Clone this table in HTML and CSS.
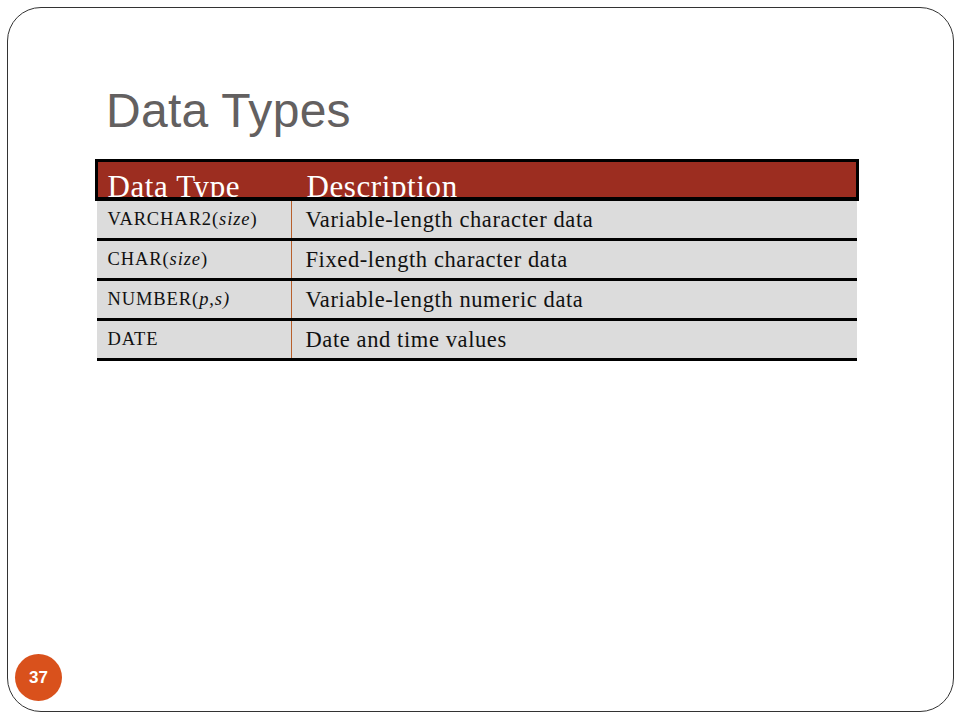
FILE: index.html
```html
<!DOCTYPE html>
<html lang="en">
<head>
<meta charset="utf-8">
<title>Data Types</title>
<link rel="stylesheet" href="styles.css">
</head>
<body>
<div class="slide">
  <h1 class="title">Data Types</h1>
  <div class="table">
    <div class="head">
      <div class="hcell c1">Data Type</div>
      <div class="hcell c2">Description</div>
    </div>
    <div class="rows">
      <div class="row">
        <div class="cell c1">VARCHAR2(<i>size</i>)</div>
        <div class="cell c2">Variable-length character data</div>
      </div>
      <div class="row">
        <div class="cell c1">CHAR(<i>size</i>)</div>
        <div class="cell c2">Fixed-length character data</div>
      </div>
      <div class="row">
        <div class="cell c1">NUMBER(<i>p</i>,<i>s)</i></div>
        <div class="cell c2">Variable-length numeric data</div>
      </div>
      <div class="row">
        <div class="cell c1">DATE</div>
        <div class="cell c2">Date and time values</div>
      </div>
    </div>
  </div>
  <div class="footer">
    <div class="pagenum">37</div>
  </div>
</div>
</body>
</html>
```
FILE: styles.css
```css
html, body {
  margin: 0;
  padding: 0;
  background: #ffffff;
}
body {
  padding: 7px;
  width: 960px;
  height: 720px;
  box-sizing: border-box;
}
.slide {
  width: 947px;
  height: 705px;
  box-sizing: border-box;
  border: 1.5px solid #333333;
  border-radius: 34px;
  display: flex;
  flex-direction: column;
}
.title {
  margin: 75px 0 0 98px;
  font-family: "Liberation Sans", Arial, sans-serif;
  font-weight: normal;
  font-size: 48px;
  line-height: 56px;
  letter-spacing: 0.3px;
  color: #636060;
}
.table {
  margin: 20px 0 0 86.5px;
  width: 764px;
}
.head {
  height: 35px;
  border: 3px solid #000000;
  border-bottom-width: 4px;
  background: #9c2d20;
  display: grid;
  grid-template-columns: 196px 1fr;
  overflow: hidden;
  font-family: "Liberation Serif", "Times New Roman", serif;
  font-size: 31px;
  line-height: 33px;
  letter-spacing: 0.6px;
  color: #ffffff;
}
.hcell {
  padding-top: 8px;
  white-space: nowrap;
}
.hcell.c1 { padding-left: 10px; }
.hcell.c2 { padding-left: 13px; }
.rows {
  margin: 0 2px;
}
.row {
  height: 37px;
  border-bottom: 3px solid #000000;
  background: #dcdcdc;
  display: grid;
  grid-template-columns: 195px 1fr;
  font-family: "Liberation Serif", "Times New Roman", serif;
  color: #111111;
}
.cell {
  display: flex;
  align-items: center;
  white-space: nowrap;
}
.cell.c1 {
  padding-left: 11px;
  font-size: 18.5px;
  letter-spacing: 0.9px;
  border-right: 1px solid #b8602c;
}
.cell.c2 {
  padding-left: 14px;
  font-size: 22.5px;
  letter-spacing: 0.6px;
}
.footer {
  margin-top: auto;
  padding: 0 0 10px 7px;
}
.pagenum {
  width: 47px;
  height: 47px;
  border-radius: 50%;
  background: #d9511c;
  color: #ffffff;
  font-family: "Liberation Sans", Arial, sans-serif;
  font-weight: bold;
  font-size: 17px;
  display: flex;
  align-items: center;
  justify-content: center;
}
```
